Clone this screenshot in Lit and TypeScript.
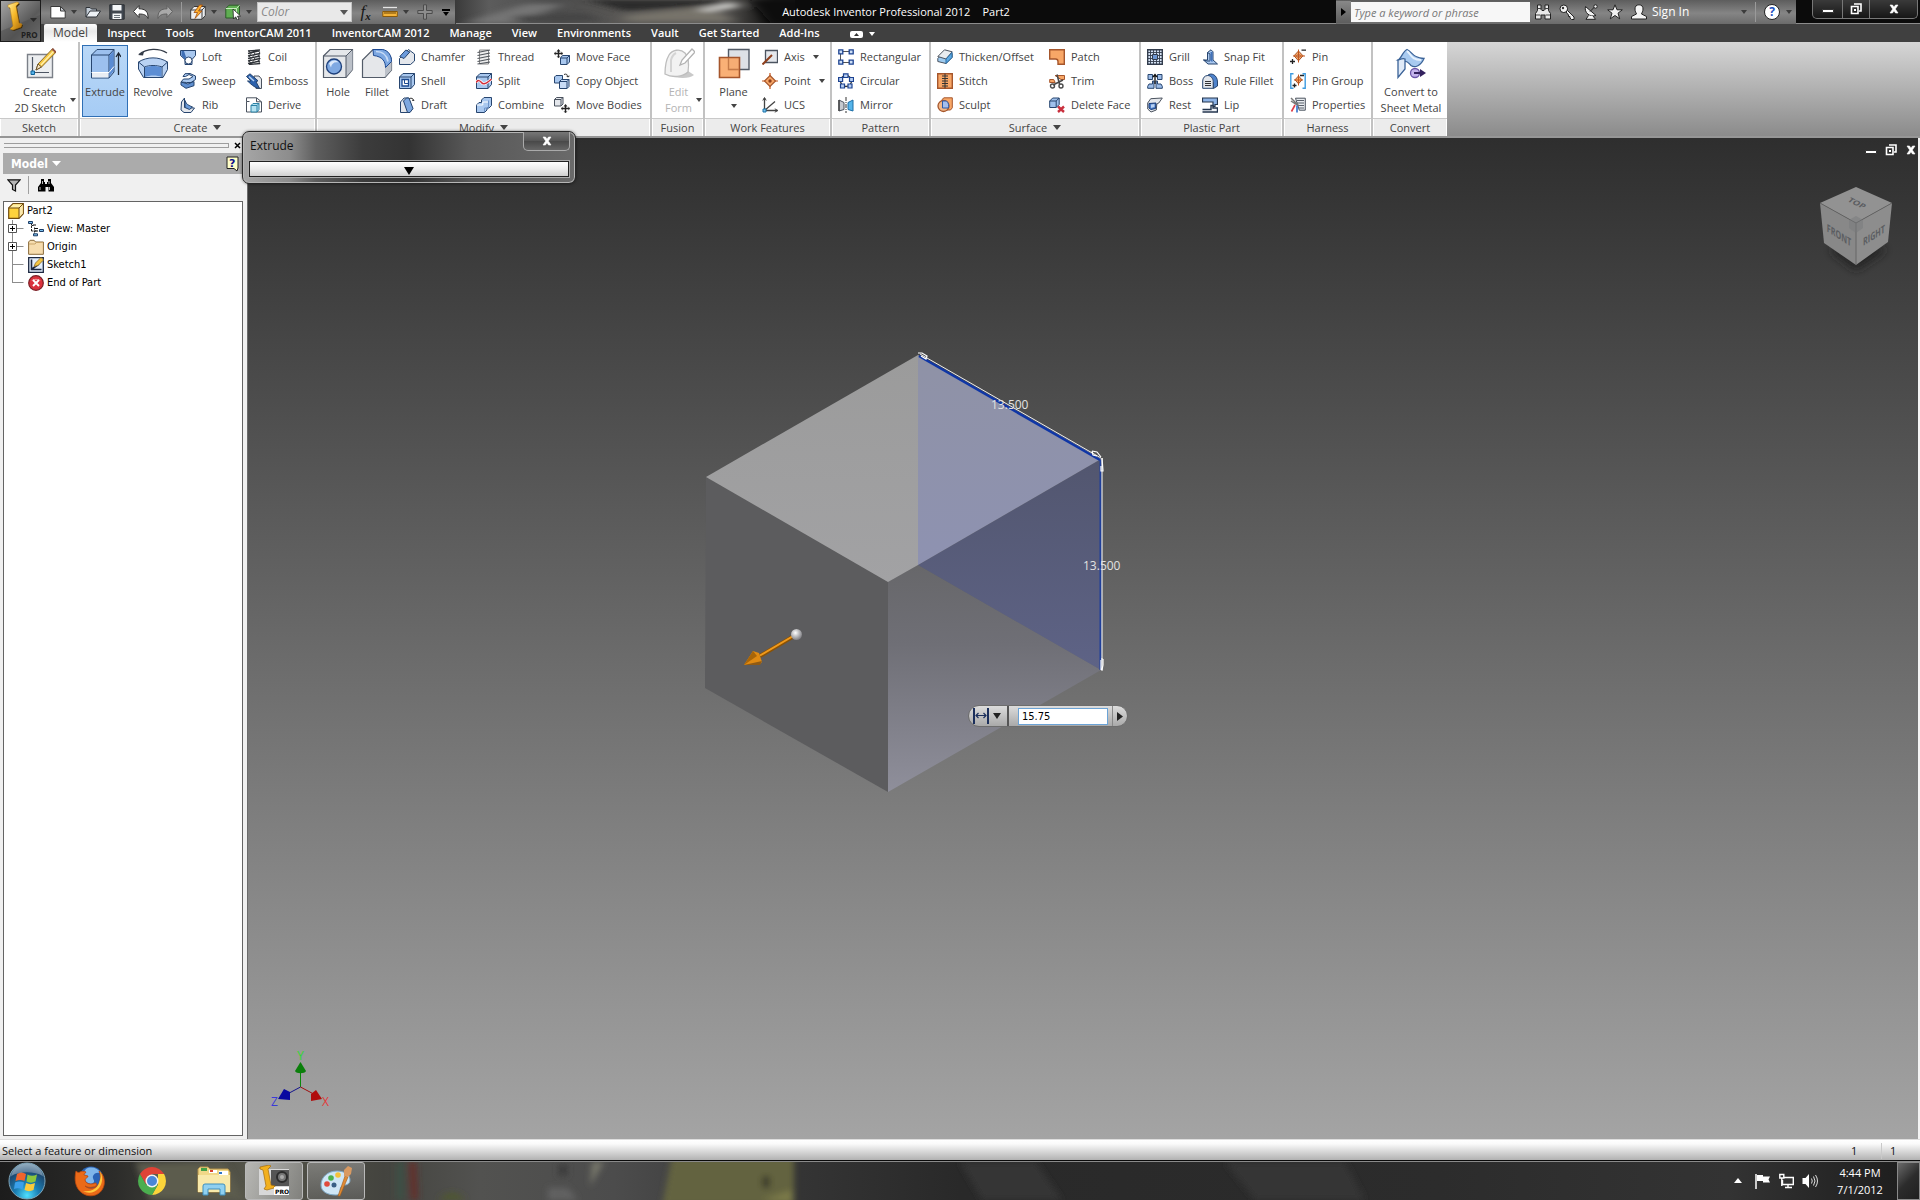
import { LitElement, html, svg, css, nothing, TemplateResult, SVGTemplateResult } from "lit";
import { customElement, state } from "lit/decorators.js";
import { classMap } from "lit/directives/class-map.js";

type Art = SVGTemplateResult;

const B = "#27456f"; // outline blue
const F = "#a9c8ef"; // light blue fill
const G = "#e4e7ec"; // pale grey fill
const O = "#f8a767"; // orange fill
const OS = "#a5562c"; // orange outline
const K = "#4b535f"; // neutral outline

/* 16 x 16 artwork, keyed by command */
const small: Record<string, Art> = {
  Loft: svg`<path d="M.5 1.500h15v5l-3.500 4v5h-7v-5L.5 6.500z" fill="${F}" stroke="${B}"/><path d="M1.500 2h2.500l2 6-1.500 2.500L1.500 6.500z" fill="#3f6fb5"/><circle cx="8.500" cy="11.500" r="3.500" fill="#fff" stroke="${B}"/>`,
  Sweep: svg`<path d="M1 9l2.500-3H9l4-2.500L9 1.500 5.500 3.500H3L5 .7l5-.2 5.500 2.500v3.500L11 9.500H6.500z" fill="${F}" stroke="${B}"/><path d="M1 9v3l5 3.300 8-2.600V8.500L8 11z" fill="#5f8fd0" stroke="${B}"/>`,
  Rib: svg`<path d="M1.500 5l3-4v9.500l10 .5-3.500 4.500h-7l-3-2.500z" fill="${G}" stroke="${B}"/><path d="M5 3.500c1 4 4 5 7.500 6.500l-3 2.500L5 10.500z" fill="#6a9ad8" stroke="${B}"/>`,
  Coil: svg`<g fill="none" stroke="#2d3136" stroke-width="1.300"><path d="M2 2l12-1M2 4.500l12-3M2 7l12-2.500M2 9.500L14 7M2 12l12-2.500M2 14.500L14 12M3 15.500l11-1"/><path d="M3 2l2 2.500L3 7l2 2.500L3 12l2 2.500M12 1.500L14 4l-2 3 2 2.500-2 2.500 2 2.500M7 2l2 3-2 2.500 2 2.500-2 2.500 2 2" stroke-width=".9"/></g>`,
  Emboss: svg`<path d="M8 3h5l2.500 3v9.500H10z" fill="${G}" stroke="${K}"/><path d="M.5 3.500L4 .8l8 7-2 1 3.500 6.500C8 15 4 10 1.500 8L5 8z" fill="#2d62ad" stroke="${B}"/><path d="M3 3.500l5 4.500" stroke="#b8d2f2" stroke-width="1.500"/>`,
  Derive: svg`<path d="M.5 4.500V.8h10l5 4V15h-15z" fill="#fff" stroke="${K}"/><path d="M10.500.8v4h5M.5 4.500h3" fill="none" stroke="${K}"/><path d="M5 8.500l2-2h6v6l-2 2.500H5z" fill="#b6e3f2" stroke="#2c83a6"/><path d="M5 8.500h6V15M11 8.500l2-2" fill="none" stroke="#2c83a6"/>`,
  Chamfer: svg`<path d="M.5 9.500l9-9 6 4.500v7l-4 3.500H.5z" fill="${G}" stroke="${B}"/><path d="M.8 7.500l6-6.500 4 2L5 9.500z" fill="#6c9bdc" stroke="${B}"/>`,
  Shell: svg`<path d="M.5 4l3.500-3.500h11.500v11L12 15.500H.5z" fill="${F}" stroke="${B}"/><path d="M12 15.500V4H.5M12 4l3.500-3.500" fill="none" stroke="${B}"/><path d="M3 6.500h6.500V13H3z" fill="#fff" stroke="#1d4a91" stroke-width="1.300"/><path d="M5.500 7v3.500h4" fill="none" stroke="#1d4a91"/>`,
  Draft: svg`<path d="M1.500 5L5 1h4.500l4 11-3 3.500h-9z" fill="${G}" stroke="${B}"/><path d="M4.500 4l3-3h2.500l4 10.500-3 4H8.500z" fill="#7ea8e0" stroke="${B}"/><path d="M10.500 1.500c2-.8 3.500 0 4.500 2l-2-.3" fill="none" stroke="#333"/>`,
  Thread: svg`<path d="M3.500 1h9v14h-9z" fill="#eee" stroke="#888"/><g stroke="#50555c" stroke-width="1.200"><path d="M1.500 3.500L14 1M1.500 6.500L14 4M1.500 9.500L14 7M1.500 12.500L14 10M1.500 15L14 13"/></g>`,
  Split: svg`<path d="M.5 4l3.500-3.500h11.500v11L12 15.500H.5z" fill="${F}" stroke="${B}"/><path d="M.5 4H12v11.500M12 4l3.500-3.500" fill="none" stroke="${B}"/><path d="M0 9.500c2-3 4-2 5.500 0s4 2 10-3.500" fill="none" stroke="#fff" stroke-width="3"/><path d="M0 9.500c2-3 4-2 5.500 0s4 2 10-3.500" fill="none" stroke="#d12e3a" stroke-width="1.500"/>`,
  Combine: svg`<path d="M5.500 3l2.500-2.500h7.500v8L13 11h-2v2l-2.500 2.500H.5V8L3 5.500h2.500z" fill="${F}" stroke="${B}"/><path d="M.8 8h6V5h6" fill="none" stroke="#fff"/><path d="M8.500 15V11h4V3.500" fill="none" stroke="#6c93c9"/>`,
  "Move Face": svg`<path d="M4.500 0L6.500 2.500h-1.300v1.300H7.500V2.500L9 4.500 7.500 6.500V5.200H5.200V7.500h1.300L4.500 9 2.500 7.500h1.300V5.200H1.500V6.500L0 4.500l1.500-2v1.300h2.300V2.500H2.500z" fill="#222"/><path d="M6.500 9l2-2.500h7v6.500L13 15.500H6.500z" fill="${F}" stroke="${B}"/><path d="M6.500 9H13v6.500M13 9l2.500-2.500" fill="none" stroke="${B}"/>`,
  "Copy Object": svg`<path d="M.5 4L2 2.500h6.500v6L7 10H.5z" fill="${F}" stroke="${B}"/><path d="M5.500 8.500l2-2h7.500v7l-2 2H5.500z" fill="#cadcf6" stroke="${B}"/><path d="M5.500 8.500h7.500v7M13 8.500l2-2" fill="none" stroke="${B}"/><path d="M10 1.500c2-1 4 0 4 2.500l-1.500-1M14 4l1.500-1" fill="none" stroke="#333"/>`,
  "Move Bodies": svg`<path d="M.5 2.500l2-2h6.500v6.500l-2 2H.5z" fill="${G}" stroke="${K}"/><path d="M.5 2.500h6.500V9M7 2.500l2-2" fill="none" stroke="${K}"/><g transform="translate(7 7)"><path d="M4.500 0L6.500 2.500h-1.300v1.300H7.500V2.500L9 4.500 7.500 6.500V5.200H5.200V7.500h1.300L4.500 9 2.500 7.500h1.300V5.200H1.500V6.500L0 4.500l1.500-2v1.300h2.300V2.500H2.500z" fill="#222"/></g>`,
  Axis: svg`<path d="M3.500 1.500h12v12h-12z" fill="${G}" stroke="${K}" stroke-width="1.300"/><path d="M.5 15.500L10 6" stroke="#8e3f1d" stroke-width="2"/>`,
  Point: svg`<path d="M8 2.500L13.500 8 8 13.500 2.500 8z" fill="${O}" stroke="${OS}" stroke-width="1.200"/><circle cx="8" cy="8" r="1.700" fill="#8e3f1d"/><path d="M8 0v3M8 13v3M0 8h3M13 8h3" stroke="#c2561e" stroke-width="1.200"/>`,
  UCS: svg`<path d="M2.500 1v12.500H15.500M2.500 13.500L13 4.500" fill="none" stroke="#444" stroke-width="1.300"/><path d="M.8 3.500L2.500.5l1.700 3M12.800 11.800l3 1.700-3 1.700" fill="none" stroke="#444"/><path d="M1 12h3v3H1z" fill="#7fc4ef" stroke="#1a73a8"/>`,
  Rectangular: svg`<path d="M2.500 2.500h11M2.500 2.500v11h11" fill="none" stroke="#555"/><g fill="#cfe0f7" stroke="#1d4391" stroke-width="1.300"><path d="M.8.800h4v4h-4zM11.200.800h4v4h-4zM.8 11.200h4v4h-4zM11.200 11.200h4v4h-4z"/></g>`,
  Circular: svg`<circle cx="8" cy="8" r="5.500" fill="none" stroke="#333" stroke-width="1.300"/><g fill="#b9d0f2" stroke="#1d4391" stroke-width="1.200"><path d="M5.500.800h4.500v3.700H5.500zM11.500 4.500h4v4h-4zM.6 4.500h4v4h-4zM10 11h4v4h-4zM2.500 11h4v4h-4z"/></g>`,
  Mirror: svg`<path d="M1 3l5 2.500v7L1 14z" fill="#c5c9cf" stroke="${K}"/><path d="M15 3l-5 2.500v7l5 1.500z" fill="#55b4ea" stroke="#1c6ea6"/><path d="M8 0v16" stroke="#333" stroke-dasharray="4 1 1 1"/><path d="M1 3V14" stroke="#444" stroke-width="1.500"/>`,
  "Thicken/Offset": svg`<path d="M.8 9.500L7.500 2.500l7.700 2v4L9 14.500l-8.200-2z" fill="#9ecbf0" stroke="${K}"/><path d="M.8 7.500L7.500.800l7.700 2L9 10z" fill="#e8ecf0" stroke="${K}"/><path d="M9 10v4.500l6-6V3.500z" fill="#5ea9e2" stroke="#2a6fa8"/>`,
  Stitch: svg`<path d="M.7.700h14.600v14.600H.700z" fill="${O}" stroke="${OS}" stroke-width="1.400"/><path d="M8 .7v14.600" stroke="#333"/><path d="M5 3h6M5 5.500h6M5 8h6M5 10.500h6M5 13h6" stroke="#333" stroke-width="1.200"/>`,
  Sculpt: svg`<path d="M5 2.500L7 .8h8.300v10L13.500 13H5z" fill="${O}" stroke="${OS}"/><circle cx="6.500" cy="9" r="5.500" fill="#f3b98a" stroke="${OS}" stroke-width="1.300"/><path d="M5.500 4h4c2.500 2 2.500 5 1.800 7H5.500z" fill="#a5bfee" stroke="#2d5ba9"/>`,
  Patch: svg`<path d="M.7.700h14.600v14.600H9V12.500c0-1.500-1-2.500-2.500-2.500H.7z" fill="${O}" stroke="${OS}" stroke-width="1.400"/>`,
  Trim: svg`<path d="M6 2.500h9.500v4H12z" fill="${O}" stroke="${OS}"/><path d="M.7 6.500h4l1.500 3H.7z" fill="${O}" stroke="${OS}"/><path d="M8 1.500L10.500 11M14 7L4 12" stroke="#4a4a4a" stroke-width="1.600"/><circle cx="12" cy="13" r="2" fill="none" stroke="#4a4a4a" stroke-width="1.400"/><circle cx="3.500" cy="13" r="2" fill="none" stroke="#4a4a4a" stroke-width="1.400"/>`,
  "Delete Face": svg`<path d="M.7 4l3-3h6.500v6.500l-3 3H.7z" fill="#9fc0ec" stroke="${B}"/><path d="M.7 4h6.500v6.500M7.200 4l3-3" fill="none" stroke="${B}"/><path d="M9 9.500l6 5.500M15 9.500L9 15" stroke="#c9303e" stroke-width="2.400"/>`,
  Grill: svg`<path d="M.7.700h14.600v14.600H.700z" fill="#d4e2f5" stroke="#333d4d" stroke-width="1.400"/><path d="M3.500 1v14M6.500 1v14M9.500 1v14M12.500 1v14M1 3.500h14M1 6.500h14M1 9.500h14M1 12.500h14" stroke="#333d4d" stroke-width=".9"/><path d="M5.500 5.500h5v5h-5z" fill="#6d97d3" stroke="#333d4d"/>`,
  Boss: svg`<g fill="#9cbce8" stroke="${B}"><path d="M1 1.500h4.500v5H1zM10.500 1.500H15v5h-4.500zM2 11h3.500V8h1.500v3h0v4.300H.7v-2zM14 11h-3.500V8H9v3h0v4.300h6.300v-2z"/></g><path d="M8 2v9M6 4l2-2.500L10 4" fill="none" stroke="#111" stroke-width="1.300"/>`,
  Rest: svg`<path d="M.7 6l3-4.300L15.300 1l-3.500 5-2 1-.5 6-5.300 2L.7 12z" fill="${G}" stroke="${K}"/><path d="M2 6.500l7-.5-.5 5.500L4 12.500 2 11z" fill="#4a7cc7" stroke="#163a78"/><path d="M4 7.500l3.500-.5v3L4 11z" fill="#b8d1f3"/>`,
  "Snap Fit": svg`<path d="M5.500 3.500L9 .8l2 2V11l4.500 4H6l-4.500-4h4z" fill="${F}" stroke="${B}"/><path d="M5.500 3.500L8 5v6.500M1.500 11l3.500 1h3" fill="none" stroke="${B}"/><path d="M8.500 3v9l2 1V3z" fill="#4273bb"/>`,
  "Rule Fillet": svg`<path d="M5.500 2.500C9-1 15.500 2 15.500 9v4l-4 2.500V10z" fill="#4f83cc" stroke="${B}"/><path d="M.7 15.300V8c0-3 2-5.500 5-5.500s5.500 3 5.500 6v6.800z" fill="${G}" stroke="${B}"/><path d="M3 8.500h6M3 10.500h6M3 12.500h6" stroke="#333"/>`,
  Lip: svg`<path d="M.5 1h15v6.500h-2.500v2h-2V5H.5z" fill="#8db3e6" stroke="#24364f" stroke-width="1.200"/><path d="M.5 12.500h8.500V8.500h2v2.500h4.500v4H.5" fill="#eef2f7" stroke="#24364f" stroke-width="1.400"/>`,
  Pin: svg`<path d="M8.500 2L13 6.800l-4.500 5L4 6.800z" fill="${O}" stroke="${OS}"/><path d="M8.500 5L10.500 7l-2 2-2-2z" fill="#fff" stroke="${OS}"/><path d="M8.500.5v13M3 7h12" stroke="#c2561e"/><path d="M0 12.500h5M2.500 10v5M11.500 1.200H16" stroke="#222" stroke-width="1.300"/>`,
  "Pin Group": svg`<path d="M3.500.8H.8v14.400h2.700M12.500.8h2.700v14.400h-2.700" fill="none" stroke="#3d9be0" stroke-width="1.400"/><path d="M8.500 3L12 6.800l-3.500 4-3.500-4z" fill="${O}" stroke="${OS}"/><path d="M8.500 1.500v11M4 7h9" stroke="#c2561e"/><path d="M2.500 12.500h4M4.500 10.500v4M10 2.500h4" stroke="#222" stroke-width="1.300"/>`,
  Properties: svg`<path d="M5.500 1.200h9.800v12h-6z" fill="#e8ebef" stroke="${K}"/><path d="M7 3.500h7M7 6h7M9 8.500h5M9 11h5" stroke="#59606b"/><path d="M1 1l8 8M1 4l6 4" stroke="#777" stroke-width="1.500"/><path d="M5 8L1.500 14.500" stroke="#de3b46" stroke-width="1.600"/><path d="M7 8.500v7" stroke="#2f6fcb" stroke-width="1.600"/>`,
};

/* 32 x 32 artwork */
const large: Record<string, Art> = {
  Sketch: svg`<path d="M3.500 6.500h25v23h-25z" fill="#eceef0" stroke="#7b8088" stroke-width="1.400"/><path d="M8.500 9v17M8 24.500h17" fill="none" stroke="#4c5563" stroke-width="1.200"/><path d="M7 23h3.500v3.500H7z" fill="#56b2e8" stroke="#11659b"/><path d="M12 22l2-6L28.500.8l3.500 3.400L17.500 19z" fill="#f6c945" stroke="#8b6a2a"/><path d="M28 1.300L28.800.5 32 3.700l-1 1z" fill="#b05a4a" stroke="#83463a"/><path d="M12 22l2-6 3.500 3z" fill="#f7e4c0" stroke="#6b5530"/><path d="M17 17L29.500 3.500" stroke="#fff2b5" stroke-width="1.200"/>`,
  Extrude: svg`<path d="M2.500 7L8 1.500h17V24l-5 6H2.500z" fill="#9cc0ee" stroke="${B}"/><path d="M2.500 7H20v23M20 7l5-5.500" fill="none" stroke="${B}"/><path d="M20.500 7.500l4-4.500v20l-4 5z" fill="#5a8cd3"/><path d="M3 24.500h16.500v5H3z" fill="#e9edf3"/><path d="M2.500 24.500H20l5-6" fill="none" stroke="#fff"/><path d="M29.500 27V6M27 9l2.500-4L32 9" fill="none" stroke="#1d2631" stroke-width="1.300"/>`,
  Revolve: svg`<path d="M2 6.500C10 0 22 0 30 5" fill="none" stroke="#333b48" stroke-width="1.300"/><path d="M1 7l6-3.500-1 4z" fill="#333b48"/><path d="M1.500 14C10 8.500 22 8.500 30.500 14v7.500L26 29.500H6.500L1.500 21z" fill="#b9d2f3" stroke="${B}"/><path d="M7.500 19c5-2 12-2 17.500 0l5.500-5M1.500 14l6 5v10M25 19v10" fill="none" stroke="${B}"/><path d="M8 19.500c5-2 12-2 16.500 0V29c-4-2-12-2-16.500 0z" fill="#5d8ed4"/>`,
  Hole: svg`<path d="M1.500 8L8 1.500h22.500v20L24 29.500H1.500z" fill="#e5e7ea" stroke="#525b68" stroke-width="1.200"/><path d="M24 8.500l6.500-6.500v19.500L24 29z" fill="#bcc1c9"/><path d="M1.500 8H24v21.500M24 8l6.500-6.500" fill="none" stroke="#525b68"/><circle cx="12" cy="18.500" r="7.500" fill="#7fa9e2" stroke="#1d3f7a" stroke-width="1.300"/><path d="M7 15.500c2-3.500 7-4 9.500-1-4-1-7 1-7.500 5z" fill="#dce9fa"/>`,
  Fillet: svg`<path d="M1.500 29.500V12L12 1.500h9C27 3 30.500 8 30.500 14v8L24 29.500z" fill="#e5e7ea" stroke="#525b68" stroke-width="1.200"/><path d="M24 15l6.500-3v10L24 29z" fill="#bcc1c9"/><path d="M12 1.500h9.500c6 1 9 6 9 12l-6 6c0-6-3-11-12-12z" fill="#7ca7e1" stroke="#1d4a94"/><path d="M15 3.500c7 0 11 4 12 10" fill="none" stroke="#c7dbf6" stroke-width="1.600"/>`,
  Form: svg`<path d="M7 27c6 4 20 4 24 0l-6-4z" fill="#c9c9c9"/><path d="M2 26c0-8 1-14 4-19 3-5 11-7 16-2 4 4 4 12 3 19-5 5-16 6-23 2z" fill="#f2f2f2" stroke="#bdbdbd" stroke-width="1.300"/><path d="M8 24V12c1-4 3-6 5-7" fill="none" stroke="#d4d4d4" stroke-width="2"/><path d="M17 17l2-5L29 1l3 3-10 11z" fill="#fff" stroke="#b2b2b2" stroke-width="1.300"/>`,
  Plane: svg`<path d="M10.500 1.500h20.500v20H10.500z" fill="#dde1e6" stroke="#515a66" stroke-width="1.400"/><path d="M1.500 9.500h20v20h-20z" fill="${O}" fill-opacity=".9" stroke="${OS}" stroke-width="1.600"/><path d="M10.500 10v11.500h10.500" fill="none" stroke="#c57a48" stroke-width="1.300"/>`,
  Convert: svg`<path d="M3 12c3-1 5-9 9-10.500 5 2 6 9 17 9-3 7-9 10-13 7-3-3-4-5-6-4z" fill="#a8caf0" stroke="#3a6297" stroke-width="1.300"/><path d="M3 12c3-1 5-2 7-1v10L3 29.500z" fill="#dfeaf8" stroke="#3a6297" stroke-width="1.300"/><path d="M12 3c4 3 4 9 14 9" fill="none" stroke="#e6f1fd" stroke-width="2"/><circle cx="20" cy="25" r="4.500" fill="#c4b4ec" stroke="#6a55a8" stroke-width="1.300"/><path d="M19 24h6v-3l6 4-6 4v-3h-6z" fill="#34225f"/>`,
};

/* quick access and info centre artwork, 16 x 16 */
const tool: Record<string, Art> = {
  New: svg`<path d="M.8 2.500h9.700l4.700 4.500v7H.8z" fill="#fff" stroke="#3a3a3a"/><path d="M10.500 2.500V7h4.700z" fill="#c7ccd2" stroke="#3a3a3a"/>`,
  Open: svg`<path d="M1 13V3.500h4l1.500 1.500h5v2" fill="#c3ccd6" stroke="#2f3338"/><path d="M1 13L5 7h10.500l-4 6z" fill="#eef2f6" stroke="#2f3338"/>`,
  Save: svg`<path d="M.8.800h14.400v14.400H.800z" fill="#404750" stroke="#2a2e33"/><path d="M3.500 1h9v5.500h-9zM3.500 9.500h9V15h-9z" fill="#f5f7f9"/><path d="M5 11.500h6M5 13.500h6" stroke="#6a727c"/>`,
  Undo: svg`<path d="M6 1.500v3.300c6 0 9.500 2.500 9 9.700-1.500-3.500-4-4.500-9-4.500v3.500L.5 7.500z" fill="#fff" stroke="#333"/>`,
  Redo: svg`<path d="M10 1.500v3.300c-6 0-9.500 2.500-9 9.700 1.500-3.500 4-4.500 9-4.500v3.500l5.500-6z" fill="#a9a9a9" stroke="#606060"/>`,
  Update: svg`<path d="M.7 6L4 2.500h11.300v9L12 15.300H.7z" fill="#eceef0" stroke="#3a3a3a"/><path d="M.7 6H12v9M12 6l3.300-3.500" fill="none" stroke="#3a3a3a"/><path d="M9.500 1L4 8.500h3.500L5 14.500 12 7H8.500l4-6z" fill="#ffb02e" stroke="#a04c0e" stroke-width=".8"/>`,
  Select: svg`<path d="M.8 4.500L4 1.200h10.500v9L11.500 14H.8z" fill="#5fae52" stroke="#2d5a28"/><path d="M.8 4.500h10.700V14M11.500 4.500l3-3.300" fill="none" stroke="#c9ecc0"/><path d="M8 5l7.500 7-3 .2 1.500 3-1.800.800-1.500-3.200L8.500 15z" fill="#fff" stroke="#222" stroke-width=".8"/>`,
  Measure: svg`<path d="M1 3.500h14" stroke="#e5e5e5" stroke-width="1.300"/><path d="M.8 7.500h14.500v5H.8z" fill="#f4b43a" stroke="#8a5a0c"/><path d="M3 8v2M5 8v2M7 8v2M9 8v2M11 8v2M13 8v2" stroke="#6b4406"/>`,
  Plus: svg`<path d="M6.500.8h3v5.700h5.700v3H9.500v5.700h-3V9.500H.8v-3h5.700z" fill="#8d8d8d" stroke="#4c4c4c"/>`,
  Find: svg`<path d="M2.500 1h3.500v4.500l1 1h2l1-1V1h3.500v5.500l2 3v5.500h-5.500v-4h-4v4H.5V9.500l2-3z" fill="#e8e8e8" stroke="#222"/><path d="M2.500 4.500h3.500M10 4.500h3.500M1 11h4.500M10.500 11H15" stroke="#444"/>`,
  Key: svg`<circle cx="4.800" cy="4.800" r="3.800" fill="#f2f2f2" stroke="#222"/><circle cx="4" cy="4" r="1.200" fill="#333"/><path d="M7 8l1.500-1.500 6.500 6.500v2.500h-2.500L11 14v-1.500H9.500V11z" fill="#f2f2f2" stroke="#222"/>`,
  Dish: svg`<path d="M2.500 2.500c-1.500 6 4 11 10.500 9z" fill="#f2f2f2" stroke="#222"/><path d="M7 7.500l5-5M5.500 11.500L3 15.300h9.500L10 12" fill="#f2f2f2" stroke="#222"/><circle cx="12.500" cy="2.500" r="1.700" fill="#f2f2f2" stroke="#222"/>`,
  Star: svg`<path d="M8 .8l2 5h5.300l-4.300 3.400 1.700 5.600L8 11.500l-4.700 3.300L5 9.200.7 5.800H6z" fill="#f2f2f2" stroke="#222"/>`,
  Person: svg`<path d="M8 .8c3 0 4 2 4 4.200 0 2.500-1 3.500-1.500 5l5 2.500v2.500H.5v-2.500l5-2.500C5 8.500 4 7.500 4 5 4 2.800 5 .8 8 .8z" fill="#f5f5f5" stroke="#222"/>`,
};

const icon = (art: Art, size = 16, box = size): TemplateResult =>
  html`<svg class="ico" width=${size} height=${size} viewBox="0 0 ${box} ${box}" aria-hidden="true">${art}</svg>`;
const caret = (): TemplateResult =>
  html`<svg class="ico" width="6" height="4" viewBox="0 0 6 4" aria-hidden="true"><path d="M0 0h6L3 4z" fill="currentColor"/></svg>`;

interface Big { art: string; label: string[]; active?: boolean; disabled?: boolean; side?: boolean; below?: boolean }
interface Cmd { label: string; menu?: boolean }
interface Panel { key: string; title: string; more?: boolean; big: Big[]; cols: Cmd[][] }

const cmds = (...names: string[]): Cmd[] => names.map((label) => ({ label }));

const panels: Panel[] = [
  { key: "sketch", title: "Sketch", big: [{ art: "Sketch", label: ["Create", "2D Sketch"], side: true }], cols: [] },
  { key: "create", title: "Create", more: true, big: [{ art: "Extrude", label: ["Extrude"], active: true }, { art: "Revolve", label: ["Revolve"] }], cols: [cmds("Loft", "Sweep", "Rib"), cmds("Coil", "Emboss", "Derive")] },
  { key: "modify", title: "Modify", more: true, big: [{ art: "Hole", label: ["Hole"] }, { art: "Fillet", label: ["Fillet"] }], cols: [cmds("Chamfer", "Shell", "Draft"), cmds("Thread", "Split", "Combine"), cmds("Move Face", "Copy Object", "Move Bodies")] },
  { key: "fusion", title: "Fusion", big: [{ art: "Form", label: ["Edit", "Form"], disabled: true, side: true }], cols: [] },
  { key: "work", title: "Work Features", big: [{ art: "Plane", label: ["Plane"], below: true }], cols: [[{ label: "Axis", menu: true }, { label: "Point", menu: true }, { label: "UCS" }]] },
  { key: "pattern", title: "Pattern", big: [], cols: [cmds("Rectangular", "Circular", "Mirror")] },
  { key: "surface", title: "Surface", more: true, big: [], cols: [cmds("Thicken/Offset", "Stitch", "Sculpt"), cmds("Patch", "Trim", "Delete Face")] },
  { key: "plastic", title: "Plastic Part", big: [], cols: [cmds("Grill", "Boss", "Rest"), cmds("Snap Fit", "Rule Fillet", "Lip")] },
  { key: "harness", title: "Harness", big: [], cols: [cmds("Pin", "Pin Group", "Properties")] },
  { key: "convert", title: "Convert", big: [{ art: "Convert", label: ["Convert to", "Sheet Metal"] }], cols: [] },
];

const tabs = ["Model", "Inspect", "Tools", "InventorCAM 2011", "InventorCAM 2012", "Manage", "View", "Environments", "Vault", "Get Started", "Add-Ins"];

const treeArt: Record<string, Art> = {
  part: svg`<path d="M.7 5L5 .7h10.300v10L11 15.300H.7z" fill="#ffd23c" stroke="#6f4a10" stroke-width="1.200"/><path d="M1.300 5L5.300 1.300h9.400L11 5z" fill="#fff0a8"/><path d="M11 5l3.800-3.500v9L11 14.500z" fill="#fbe9b0"/><path d="M.7 5H11v10.300M11 5L15.300.7" fill="none" stroke="#6f4a10"/>`,
  view: svg`<path d="M3.500 2v9M3.500 4.500h2M3.500 10h5M6.500 6.500v7h2" fill="none" stroke="#222" stroke-dasharray="2 1"/><g fill="#7cc0ec" stroke="#1c3c66"><path d="M.5.500h4v2h-4zM11.500 8.500h4v2h-4zM5.500 12.800h4v2h-4z"/></g><path d="M5 4h3M7 7.500h3M7 10h3" stroke="#111"/>`,
  folder: svg`<path d="M.6 3l1.500-1.700h4L7.500 3h7.900v12.300H.6z" fill="#f6dcae" stroke="#8a6c3c"/><path d="M1 5h6l1.500-1.500H15" fill="none" stroke="#c9a56b"/>`,
  sketch: svg`<path d="M.7.700h14.600v14.600H.700z" fill="#e3eefc" stroke="#1b2740" stroke-width="1.300"/><path d="M3.500 2.500v10h10M4 12l7-5" fill="none" stroke="#1b2740" stroke-width="1.600"/><path d="M6 9.500L7.500 6 13 .5 15.500 3 10 8.500z" fill="#f5c540" stroke="#8b6a2a" stroke-width=".8"/>`,
  end: svg`<circle cx="8" cy="8" r="7.300" fill="#d9313c" stroke="#7a1e25" stroke-width="1.200"/><path d="M3 6a6 5 0 0 1 10 0c-3-1.500-7-1.500-10 0z" fill="#f08f95"/><path d="M5 5l6 6M11 5l-6 6" stroke="#fff" stroke-width="1.900"/>`,
};

const nodes = [
  { art: "view", label: "View: Master", expand: true },
  { art: "folder", label: "Origin", expand: true },
  { art: "sketch", label: "Sketch1" },
  { art: "end", label: "End of Part", last: true },
];

@customElement("app-root")
export class AppRoot extends LitElement {
  @state() private tab = "Model";
  @state() private distance = "15.75";

  static styles = css`
    :host {
      display: flex; flex-direction: column; height: 100vh; overflow: hidden;
      font: 12px/16px "Open Sans", "Noto Sans", sans-serif; color: #3c3c3c; background: #f0f0f0;
    }
    * { box-sizing: border-box; }
    button, input, select { font: inherit; color: inherit; margin: 0; padding: 0; border: 0; background: none; border-radius: 0; }
    button, a { display: flex; align-items: center; justify-content: center; white-space: nowrap; }
    a { color: inherit; text-decoration: none; }
    ul { list-style: none; margin: 0; padding: 0; }
    h1, h2 { font: inherit; margin: 0; }
    .ico { display: block; flex: none; }

    .header { display: grid; grid-template-columns: 41px 1fr; grid-template-rows: 24px 18px; background: #404040; flex: none; }
    .app { grid-row: 1 / 3; border: 1px solid #1c1c1c; background: linear-gradient(135deg, #a5a5a5, #5a5a5a 60%, #8a8a8a); }
    .title { display: flex; background: #0b0b0b; border-bottom: 1px solid #8c8c8c; position: relative; min-width: 0; }
    .wall { position: absolute; left: 414px; top: 0; width: 340px; height: 23px; }
    .qat { display: flex; align-items: center; gap: 8px; width: 415px; height: 24px; padding: 0 4px 0 9px; position: relative;
      background: linear-gradient(#5d5d5d, #858585 55%, #6b6b6b); border-right: 1px solid #3a3a3a; color: #3c3c3c; flex: none; }
    .split { gap: 5px; }
    .rule { width: 1px; height: 20px; background: #9a9a9a; flex: none; }
    .combo { display: flex; align-items: center; width: 98px; height: 20px; background: #e9e9e9; border: 1px solid #c4c4c4; padding: 0 3px; margin: 0 -2px 0 -3px; }
    .combo select { appearance: none; flex: 1; min-width: 0; font-style: italic; color: #8a8a8a; outline: 0; }
    .fx { font: italic 17px/20px "Liberation Serif", serif; color: #161616; width: 16px; margin-right: 1px; }
    .fx sub { font-size: 11px; font-weight: 700; vertical-align: -3px; line-height: 0; }
    .more { flex-direction: column; gap: 1px; color: #000; width: 10px; }
    .more::before { content: ""; width: 8px; height: 2px; background: #000; }
    .caption { flex: 1; display: flex; align-items: center; justify-content: center; gap: 12px; color: #fff; font-size: 11px; position: relative; min-width: 0; white-space: nowrap; }
    .info { display: flex; align-items: center; gap: 8px; width: 460px; height: 24px; background: linear-gradient(#5d5d5d, #858585 55%, #6b6b6b); color: #fff; flex: none; }
    .info .open { width: 15px; height: 22px; color: #000; background: linear-gradient(#888, #5e5e5e); margin-right: -8px; }
    .info input { width: 179px; height: 20px; background: #f7f7f7; padding: 0 3px; font-size: 11px; font-style: italic; margin-right: -3px; }
    .info input::placeholder { color: #777; opacity: 1; }
    .sign { flex: 1; justify-content: space-between; margin-left: -3px; font-size: 12px; }
    .info .ico { color: #3c3c3c; }
    .help { width: 16px; height: 16px; border-radius: 8px; background: #fff; color: #1d4fc0; font-weight: 700; line-height: 14px; border: 1px solid #222; }
    .help-box { gap: 6px; padding-right: 4px; }
    .win { display: flex; height: 19px; margin: 0 2px 0 16px; border: 1px solid #777; border-top: 0; border-radius: 0 0 5px 5px; background: linear-gradient(#3a3a3a, #161616); flex: none; }
    .win button { width: 27px; padding-bottom: 1px; }
    .win button + button { border-left: 1px solid #777; }
    .win button:first-child { width: 29px; }
    .win button:last-child { width: 48px; }

    .tabs { display: flex; align-items: flex-end; padding-left: 3px; color: #fff; font-weight: 600; font-size: 11px; }
    .tabs a { height: 18px; padding: 0 10px; }
    .tabs .on { background: linear-gradient(#fdfdfd, #e9e9e9 40%, #fff); color: #444; font-weight: 400; font-size: 12px; border-radius: 2px 2px 0 0; padding: 0 9px; }
    .tabs .min { margin-left: 20px; gap: 6px; height: 16px; }

    .ribbon { display: flex; height: 96px; background: linear-gradient(#d6d6d6, #8b8b8b); border-bottom: 2px solid #969696; flex: none; }
    .panel { display: flex; flex-direction: column; background: #fff; border-right: 2px solid #c2c2c2; color: #444; font-size: 11px; }
    .panel.convert { border-right: 0; }
    .body { flex: 1; display: grid; padding: 3px 0 0 2px; border-bottom: 1px solid #c9c9c9; }
    .name { display: flex; align-items: center; justify-content: center; gap: 6px; height: 17px; background: #ececec; margin: 0 1px; }
    .sketch .body { grid-template-columns: 76px; }
    .create .body { grid-template-columns: 46px 50px 66px 71px; }
    .modify .body { grid-template-columns: 38px 40px 77px 78px 98px; }
    .fusion .body { grid-template-columns: 49px; }
    .work .body { grid-template-columns: 53px 70px; }
    .pattern .body { grid-template-columns: 93px; }
    .surface .body { grid-template-columns: 112px 92px; }
    .plastic .body { grid-template-columns: 55px 82px; }
    .harness .body { grid-template-columns: 83px; }
    .convert .body { grid-template-columns: 72px; }
    .pattern .body, .surface .body, .plastic .body, .harness .body { padding-left: 4px; }
    .big { flex-direction: column; justify-content: flex-start; height: 72px; padding: 2px 0 0; border: 1px solid transparent; gap: 4px; }
    .big.on { background: linear-gradient(#bad8f7, #a6ccf5); border-color: #2f6fb5; }
    .big:disabled { color: #b4b4b4; }
    .lines { display: flex; align-items: center; gap: 4px; }
    .lines.beside { padding-left: 10px; }
    .lines.below { flex-direction: column; gap: 4px; }
    .lines .ico { color: #444; }
    .col { display: flex; flex-direction: column; padding-left: 2px; }
    .col button { height: 24px; justify-content: flex-start; gap: 6px; }
    .col span + .ico { margin-left: 2px; }

    .main { flex: 1; display: flex; min-height: 0; }
    .side { width: 248px; display: flex; flex-direction: column; border-right: 1px solid #6b6b6b; background: #f0f0f0; flex: none;
      font: 11px/18px "DejaVu Sans Condensed", "Noto Sans", sans-serif; color: #000; padding: 0 0 3px 3px; }
    .grip { display: flex; align-items: center; gap: 5px; height: 15px; padding-left: 1px; }
    .grip i { width: 225px; height: 5px; border: solid #9d9d9d; border-width: 1px 1px 1px 0; }
    .head { display: flex; align-items: center; justify-content: space-between; height: 21px; background: #ababab; color: #fff; padding: 0 7px 0 8px; }
    .head button { gap: 4px; font: 700 12px/18px "DejaVu Sans Condensed", sans-serif; }
    .bar { display: flex; align-items: center; gap: 7px; height: 22px; padding: 0 4px; margin-bottom: 5px; }
    .bar .rule { height: 18px; margin-right: 2px; background: #a0a0a0; }
    .tree { flex: 1; border: 1px solid #646464; background: #fff; margin-right: 4px; }
    .node { display: flex; align-items: center; height: 18px; gap: 3px; }
    .node .wire { margin-right: -3px; }
    .node.root { padding-left: 4px; }

    .view { flex: 1; position: relative; background: linear-gradient(#2e2e2e, #a4a4a4); border-right: 2px solid #f4f4f4; overflow: hidden; min-width: 0; }
    .doc { display: flex; justify-content: flex-end; gap: 8px; padding: 6px 1px; }
    .viewcube { position: absolute; right: 20px; top: 42px; }
    .model { position: absolute; left: 440px; top: 200px; }
    .triad { position: absolute; left: 18px; bottom: 25px; }
    .mini { position: absolute; left: 720px; top: 567px; display: flex; align-items: center; height: 22px; width: 160px; border-radius: 11px; border: 1px solid #6d6d6d;
      background: linear-gradient(#dcdcdc, #a9a9a9); font: 11px/16px "DejaVu Sans Condensed", sans-serif; color: #000; }
    .mini .mode { gap: 4px; justify-content: flex-start; padding-left: 4px; width: 40px; height: 20px; border-right: 2px solid #555; }
    .mini input { width: 90px; height: 17px; margin: 0 4px 0 9px; background: #fff; border: 1px solid #6ba3d6; padding: 0 3px; }
    .mini .go { flex: 1; height: 20px; border-left: 1px solid #888; }

    .dialog { position: absolute; left: 242px; top: 131px; width: 334px; height: 53px; border: 1px solid #262626; border-radius: 7px; padding: 0 5px 5px; color: #111;
      box-shadow: inset 0 0 0 1px #b5b5b5, 0 0 3px rgba(0,0,0,.5);
      background: linear-gradient(90deg, #a6a6a6, #8d8d8d 14%, #5e5e5e 22%, #3c3c3c 36%, #333 50%, #585858 68%, #6a6a6a); display: flex; flex-direction: column; }
    .dialog .top { display: flex; justify-content: space-between; height: 28px; }
    .dialog h2 { padding: 6px 0 0 2px; }
    .dialog .x { width: 47px; height: 19px; border: 1px solid #aaa; border-top: 0; border-radius: 0 0 5px 5px; background: linear-gradient(#777, #555 50%, #484848 50%, #666); }
    .dialog .roll { flex: 1; border: 1px solid #222; outline: 1px solid #aaa; background: linear-gradient(#fff, #ececec 50%, #cfcfcf); margin: 1px; padding-top: 3px; }

    .status { display: flex; align-items: center; height: 21px; padding: 2px 0 0 2px; color: #111; background: linear-gradient(#fff, #fafafa 20%, #b2b2b2); border-top: 1px solid #dedede; flex: none; font-size: 11px; }
    .status p { margin: 0; flex: 1; }
    .status output { width: 39px; padding-left: 9px; }
    .status output + output { border-left: 1px solid #c9c9c9; padding-left: 8px; }

    .task { position: relative; height: 40px; background: #2a2a2a; border-top: 1px solid #0a0a0a; box-shadow: inset 0 1px #8a8a8a; display: flex; align-items: center; flex: none; color: #fff; overflow: hidden; }
    .task .scene { position: absolute; left: 0; top: 1px; width: 100%; height: 38px; }
    .task > button, .task > .tray { position: relative; }
    .task .launch { width: 62px; height: 38px; }
    .task .orb { width: 59px; padding-right: 5px; }
    .task .running { width: 58px; height: 38px; border: 1px solid #b9b9b9; border-radius: 3px; margin-right: 4px; background: linear-gradient(rgba(170,170,170,.5), rgba(110,110,110,.5)); }
    .task .running.front { background: linear-gradient(110deg, rgba(225,225,225,.7), rgba(170,170,170,.55)); }
    .tray { margin-left: auto; display: flex; align-items: center; gap: 8px; height: 100%; }
    .tray .hidden { margin-right: 5px; }
    .clock { text-align: center; line-height: 17px; font-size: 11px; width: 74px; margin: 0 -8px 0 -3px; }
    .peek { width: 23px; height: 38px; border: 1px solid #8a8a8a; background: linear-gradient(135deg, #6a6a6a, #2c2c2c 50%, #1f1f1f); }
  `;

  private bigButton(b: Big) {
    const arrow = b.side || b.below;
    return html`<button class=${classMap({ big: true, on: !!b.active })} ?disabled=${b.disabled}>
      ${icon(large[b.art], 32)}
      <span class=${classMap({ lines: true, beside: !!b.side, below: !!b.below })}>
        <span>${b.label.map((l, i) => html`${i ? html`<br />` : nothing}${l}`)}</span>${arrow ? caret() : nothing}
      </span>
    </button>`;
  }

  private panel(p: Panel) {
    return html`<section class="panel ${p.key}">
      <div class="body">
        ${p.big.map((b) => this.bigButton(b))}
        ${p.cols.map((col) => html`<div class="col">
          ${col.map((c) => html`<button>${icon(small[c.label])}<span>${c.label}</span>${c.menu ? caret() : nothing}</button>`)}
        </div>`)}
      </div>
      <h2 class="name">${p.title}${p.more ? html`<svg class="ico" width="8" height="5" viewBox="0 0 8 5"><path d="M0 0h8L4 5z" fill="#444"/></svg>` : nothing}</h2>
    </section>`;
  }

  private winGlyphs(kind: string) {
    const art: Record<string, Art> = {
      Minimize: svg`<path d="M.5 6.500h11v3H.5z" fill="#fff" stroke="#333"/>`,
      Restore: svg`<path d="M4 1h7v7H9M1.500 3.500h6.500v7H1.500z" fill="none" stroke="#fff" stroke-width="1.600"/><path d="M4 6h2v2H4z" fill="#fff"/>`,
      Close: svg`<path d="M2 2h2.500L6 4.300 7.500 2H10L7.300 6 10 10H7.500L6 7.700 4.500 10H2l2.700-4z" fill="#fff" stroke="#fff" stroke-width=".6"/>`,
    };
    return html`<svg class="ico" width="12" height="12" viewBox="0 0 12 12" aria-hidden="true">${art[kind]}</svg>`;
  }

  private quickAccess() {
    const one = (n: string) => html`<button aria-label=${n}>${icon(tool[n])}</button>`;
    const menu = (n: string) => html`<button class="split" aria-label=${n}>${icon(tool[n])}${caret()}</button>`;
    return html`<div class="qat">
      ${menu("New")}${one("Open")}${one("Save")}${one("Undo")}${one("Redo")}
      <span class="rule"></span>
      ${menu("Update")}${menu("Select")}
      <label class="combo"><select aria-label="Color"><option>Color</option></select>
        <svg class="ico" width="8" height="5" viewBox="0 0 8 5"><path d="M0 0h8L4 5z" fill="#555"/></svg></label>
      <button class="fx" aria-label="Parameters"><span>f<sub>x</sub></span></button>
      ${menu("Measure")}${one("Plus")}
      <button class="more" aria-label="Customize">${caret()}</button>
    </div>`;
  }

  private header() {
    const one = (n: string) => html`<button aria-label=${n}>${icon(tool[n])}</button>`;
    return html`<header class="header">
      <button class="app" aria-label="Application menu">
        <svg class="ico" width="39" height="40" viewBox="0 0 39 40">
          <defs><linearGradient id="gold" x1="0" y1="0" x2="1" y2="1"><stop offset="0" stop-color="#fff0a0"/><stop offset=".45" stop-color="#f7b92a"/><stop offset="1" stop-color="#a86708"/></linearGradient></defs>
          <path d="M0 30L39 14v26H0z" fill="#4c4c4c" opacity=".5"/>
          <path d="M7 4l9-3 2 1-3 3 3 17 3 1-1 3-8 3-3-1 3-3L9 7 7 6z" fill="#3d2a08" transform="translate(1 1)"/>
          <path d="M7 4l9-3 2 1-3 3 3 17 3 1-1 3-8 3-3-1 3-3L9 7 7 6z" fill="url(#gold)" stroke="#b97c10" stroke-width=".5"/>
          <path d="M29 17h7l-3.500 4z" fill="#2a2a2a"/>
          <text x="20" y="37" font-family="Open Sans" font-size="8" font-weight="700" fill="#1e1e1e">PRO</text>
        </svg>
      </button>
      <div class="title">
        <svg class="wall" viewBox="0 0 340 23" preserveAspectRatio="none" aria-hidden="true">
          <defs>
            <linearGradient id="tw" x1="0" x2="1" y1="0" y2="0"><stop offset="0" stop-color="#3a3a3a"/><stop offset=".1" stop-color="#5c5c5c"/><stop offset=".3" stop-color="#4c4c4c"/><stop offset=".55" stop-color="#5d5b58"/><stop offset=".78" stop-color="#5d5b58"/><stop offset=".94" stop-color="#0b0b0b"/></linearGradient>
            <filter id="soft" x="-20%" y="-60%" width="140%" height="220%"><feGaussianBlur stdDeviation="7 2"/></filter>
          </defs>
          <path d="M0 0h340v23H0z" fill="url(#tw)"/>
          <g filter="url(#soft)"><path d="M10 23L70 4 110 4 60 23z" fill="#747474"/><path d="M130 0h140v4l-100 7z" fill="#2b2b2b"/><path d="M60 16l70-3 20 8H60z" fill="#444"/><path d="M170 16l80-9 30 14H170z" fill="#77736b"/><path d="M245 9l35-7 4 5-34 5z" fill="#d6d5d2"/><path d="M295 0h60v23h-40z" fill="#070707"/></g>
        </svg>
        ${this.quickAccess()}
        <h1 class="caption"><span>Autodesk Inventor Professional 2012</span><span>Part2</span></h1>
        <div class="info">
          <button class="open" aria-label="Collapse"><svg class="ico" width="5" height="8" viewBox="0 0 5 8"><path d="M0 0l5 4-5 4z" fill="#000"/></svg></button>
          <input type="search" aria-label="Search help" placeholder="Type a keyword or phrase" />
          ${["Find", "Key", "Dish", "Star", "Person"].map(one)}
          <button class="sign"><span>Sign In</span>${caret()}</button>
          <span class="rule"></span>
          <button class="help-box" aria-label="Help"><span class="help">?</span>${caret()}</button>
        </div>
        <div class="win">${["Minimize", "Restore", "Close"].map((k) => html`<button aria-label=${k}>${this.winGlyphs(k)}</button>`)}</div>
      </div>
      <nav class="tabs">
        ${tabs.map((t) => html`<a href="#" class=${classMap({ on: t === this.tab })} @click=${(e: Event) => { e.preventDefault(); this.tab = t; }}>${t}</a>`)}
        <button class="min" aria-label="Minimize ribbon">
          <svg class="ico" width="13" height="7" viewBox="0 0 13 7"><rect width="13" height="7" rx="2" fill="#fff"/><path d="M4 5h5L6.500 2z" fill="#333"/></svg>${caret()}
        </button>
      </nav>
    </header>`;
  }

  private browser() {
    return html`<aside class="side">
      <div class="grip"><i></i><button aria-label="Close browser"><svg class="ico" width="7" height="7" viewBox="0 0 7 7"><path d="M1 1l5 5M6 1L1 6" stroke="#000" stroke-width="1.500"/></svg></button></div>
      <div class="head">
        <button>Model<svg class="ico" width="9" height="5" viewBox="0 0 9 5"><path d="M0 0h9L4.500 5z" fill="#fff"/></svg></button>
        <button aria-label="Help"><svg class="ico" width="14" height="16" viewBox="0 0 14 16"><path d="M1 1h11v11l-1 3-3-2.500H1z" fill="#ffffc8" stroke="#222"/><text x="3" y="11" font-size="11" font-weight="700" font-family="DejaVu Sans" fill="#10108a">?</text></svg></button>
      </div>
      <div class="bar">
        <button aria-label="Filter"><svg class="ico" width="14" height="13" viewBox="0 0 14 13"><path d="M.8.800h12.400L8.500 6v6l-3-1.500V6z" fill="#b5b5b5" stroke="#111" stroke-width="1.200"/></svg></button>
        <span class="rule"></span>
        <button aria-label="Find"><svg class="ico" width="16" height="14" viewBox="0 0 16 14"><path d="M3 1h3v3h1v2h2V4h1V1h3v4l3 4v4.500h-5.500V9h-3v4.500H0V9l3-4z" fill="#000"/><path d="M4.500 3v3M11 3v3M2 9v3M11.500 9v3" stroke="#bbb"/></svg></button>
      </div>
      <ul class="tree">
        <li class="node root">${icon(treeArt.part)}<span>Part2</span></li>
        ${nodes.map((n) => html`<li class="node">
          <svg class="ico wire" width="24" height="18" viewBox="0 0 24 18" aria-hidden="true">
            <path d="M8.500 0V${n.last ? 9 : 18}M8.500 8.500H19.500" fill="none" stroke="#8c8c8c"/>
            ${n.expand ? svg`<path d="M4.500 4.500h8v8h-8z" fill="#fff" stroke="#555"/><path d="M6 8.500h5M8.500 6v5" stroke="#000"/>` : nothing}
          </svg>${icon(treeArt[n.art])}<span>${n.label}</span></li>`)}
      </ul>
    </aside>`;
  }

  private scene() {
    return html`<svg class="model" width="450" height="480" viewBox="688 338 450 480" role="img" aria-label="Extruded box preview">
        <defs>
          <linearGradient id="fr" x1="0" y1="0" x2="0" y2="1"><stop offset="0" stop-color="#67676a"/><stop offset=".35" stop-color="#6f6f76"/><stop offset="1" stop-color="#8f8f9b"/></linearGradient>
          <linearGradient id="bl" x1="0" y1="0" x2="0" y2="1"><stop offset="0" stop-color="#52566f"/><stop offset="1" stop-color="#5e6386"/></linearGradient>
          <linearGradient id="tb" x1="0" y1="0" x2="0" y2="1"><stop offset="0" stop-color="#8f92a6"/><stop offset="1" stop-color="#8e92b1"/></linearGradient>
          <linearGradient id="tl" x1="0" y1="0" x2="0" y2="1"><stop offset="0" stop-color="#9b9b9b"/><stop offset="1" stop-color="#a2a2a4"/></linearGradient>
          <radialGradient id="ball" cx=".4" cy=".35" r=".7"><stop offset="0" stop-color="#fff"/><stop offset="1" stop-color="#77777c"/></radialGradient>
        </defs>
        <path d="M706 477L888 582v210L705 688z" fill="#5c5c5e"/>
        <path d="M888 582l30-17 183 105-213 122z" fill="url(#fr)"/>
        <path d="M918 565l183-106v211z" fill="url(#bl)"/>
        <path d="M918 355L706 477l182 105 30-17z" fill="url(#tl)"/>
        <path d="M918 355v210l183-106z" fill="url(#tb)"/>
        <path d="M919 356l181 104" stroke="#0f36a6" stroke-width="2.500"/>
        <path d="M920 354l181 104" stroke="#fff" stroke-width=".9"/>
        <path d="M1100.500 460v210" stroke="#1f3f9a" stroke-width="2"/>
        <path d="M1102 458v213" stroke="#fff"/>
        <g fill="none" stroke="#fff" stroke-width="1.200"><path d="M918 353l4 0 5 3-1 3-5-3M1092 451l5 1 4 5M1092 451l1 4 4 1M1102 458l1 13-2 0v-5M1101 660v10M1103 659v6l-1 5M1101 659h2"/></g>
        <g font-family="Open Sans" font-size="12" fill="#e2e2e2"><text x="991" y="409">13.500</text><text x="1083" y="570">13.500</text></g>
        <path d="M794 636l-34 20" stroke="#8a5206" stroke-width="4"/><path d="M794 635.500l-34 20" stroke="#f09a1c" stroke-width="2"/>
        <path d="M744 665l9-14 6 2 3 9-3 3z" fill="#e08a12"/><path d="M744 665l9-14 4 5z" fill="#a86508"/><path d="M744 665l18-4-2 4z" fill="#8f5a14"/>
        <circle cx="796.500" cy="634.500" r="5.500" fill="url(#ball)"/>
      </svg>
      <svg class="viewcube" width="90" height="100" viewBox="1808 180 90 100" role="img" aria-label="View cube">
        <defs><filter id="sh" x="-50%" y="-50%" width="200%" height="200%"><feGaussianBlur stdDeviation="5"/></filter></defs>
        <path d="M1830 250l26 20 30-20-28-12z" fill="#222" filter="url(#sh)"/>
        <path d="M1856 187l36 16-36 20-36-20z" fill="#929292"/>
        <path d="M1820 203l36 20v42l-32-22z" fill="#888"/>
        <path d="M1892 203l-36 20v42l32-23z" fill="#8d8d8d"/>
        <path d="M1820 203l36 20 36-20M1856 223v42" fill="none" stroke="#5d5d5d" stroke-width=".8"/>
        <path d="M1856 216l7 4v8l-7 5-7-5v-8z" fill="#77797c" opacity=".5"/>
        <g font-family="Open Sans" font-weight="700" font-size="9" fill="#5b5d61" text-anchor="middle">
          <text transform="matrix(.9 .45 -.6 .6 1855 205)">TOP</text>
          <text transform="matrix(.8 .5 0 1.200 1839 239)">FRONT</text>
          <text transform="matrix(.8 -.5 0 1.200 1874 239)">RIGHT</text>
        </g>
      </svg>
      <svg class="triad" width="72" height="66" viewBox="266 1048 72 66" role="img" aria-label="Coordinate axes">
        <path d="M300.500 1087v-17" stroke="#0a8a0a"/><path d="M300.500 1087l-15 8" stroke="#14148c"/><path d="M300.500 1087l15 8" stroke="#a01010"/>
        <path d="M300.500 1062l5.500 9c-1 3-10 3-11 0z" fill="#0b7f0b"/><path d="M278 1099l6-10 6 3v8z" fill="#0a0aa0"/><path d="M322 1099l-6-9-5 4v7z" fill="#b00c0c"/>
        <g font-family="Open Sans" font-size="12" text-anchor="middle"><text x="300.500" y="1060" fill="#2fd82f">Y</text><text x="274.500" y="1106" fill="#3a3ad8">Z</text><text x="325.500" y="1106" fill="#e23a3a">X</text></g>
      </svg>
      <div class="mini">
        <button class="mode" aria-label="Extents"><svg class="ico" width="16" height="16" viewBox="0 0 16 16"><path d="M1 0v16M15 0v16" stroke="#1b2f5c" stroke-width="2"/><path d="M3 7.500h10M5.500 5L3 7.500 5.500 10M10.500 5L13 7.500 10.500 10" fill="none" stroke="#1b2f5c" stroke-width="1.200"/></svg>
          <svg class="ico" width="8" height="6" viewBox="0 0 8 6"><path d="M0 0h8L4 6z" fill="#222"/></svg></button>
        <input aria-label="Distance" .value=${this.distance} @input=${(e: Event) => (this.distance = (e.target as HTMLInputElement).value)} />
        <button class="go" aria-label="More"><svg class="ico" width="6" height="9" viewBox="0 0 6 9"><path d="M0 0l6 4.500L0 9z" fill="#222"/></svg></button>
      </div>`;
  }

  private taskbar() {
    return html`<footer class="task">
      <svg class="scene" viewBox="0 0 1920 38" preserveAspectRatio="none" aria-hidden="true">
        <defs><filter id="bl2" x="-10%" y="-50%" width="120%" height="200%"><feGaussianBlur stdDeviation="3"/></filter>
        <linearGradient id="tk" x1="0" x2="1" y1="0" y2="0"><stop offset="0" stop-color="#1c1c1c"/><stop offset=".06" stop-color="#2c2c2a"/><stop offset=".13" stop-color="#55554a"/><stop offset=".2" stop-color="#44443f"/><stop offset=".25" stop-color="#525250"/><stop offset=".32" stop-color="#4c4c4c"/><stop offset=".41" stop-color="#353535"/><stop offset=".5" stop-color="#292929"/><stop offset=".75" stop-color="#2c2c2c"/><stop offset=".9" stop-color="#333"/><stop offset="1" stop-color="#1c1c1c"/></linearGradient></defs>
        <path d="M0 0h1920v38H0z" fill="url(#tk)"/>
        <g filter="url(#bl2)">
          <path d="M135 0h90l20 38h-95z" fill="#5c5b4d"/>
          <path d="M396 0h8v38h-8z" fill="#3e4f44"/><path d="M409 0h7l2 38h-7z" fill="#652f2a"/><path d="M438 38q14-14 28 0z" fill="#50582e"/>
          <path d="M592 0h12l-14 24z" fill="#77776a"/><path d="M558 2h10v12h-10z" fill="#3c3c3c"/><path d="M548 26h20l10 12h-30z" fill="#626262"/>
          <path d="M672 -6h122v50H662z" fill="#636341"/><path d="M762 38l30-10v12z" fill="#7c7a48"/><path d="M762 14h8v12h-8z" fill="#3c3c2c"/>
          <path d="M960 0h76l26 38h-80z" fill="#363636"/><path d="M1225 0h120l20 38h-110z" fill="#353535"/>
        </g>
      </svg>
      <button class="launch orb" aria-label="Start"><svg class="ico" width="38" height="38" viewBox="0 0 38 38">
        <defs><radialGradient id="orb" cx=".5" cy=".9" r=".95"><stop offset="0" stop-color="#4fe0ff"/><stop offset=".35" stop-color="#1b7fb4"/><stop offset=".7" stop-color="#1c4a72"/><stop offset="1" stop-color="#7c9fb5"/></radialGradient></defs>
        <circle cx="19" cy="19" r="18" fill="url(#orb)" stroke="#7fa6ba"/>
        <path d="M9 12c3-2 6-2 9 0l-1.500 7c-3-1.500-6-1.500-9 0z" fill="#f0642c"/><path d="M19.500 12.500c3 1.800 6 1.800 9.500 0l-1.500 7c-3 1.500-6 1.500-9 0z" fill="#8cc63c"/>
        <path d="M7 20.500c3-1.500 6-1.500 9 0l-1.500 7c-3-1.500-6-1.500-8.500-.500z" fill="#3aa0ea"/><path d="M18 21c3 1.500 6 1.500 9 0l-1.500 7c-3 1.500-6 1.500-9 0z" fill="#fccb3a"/>
        <path d="M3 14C5 5 13 1.500 19 1.500S33 5 35 14c-9-5-23-5-32 0z" fill="#fff" opacity=".3"/></svg></button>
      <button class="launch" aria-label="Firefox"><svg class="ico" width="32" height="32" viewBox="0 0 32 32">
        <circle cx="17" cy="14" r="12.500" fill="#2a63b5"/><path d="M12 4c5-3 12-1 15 4-4-1-7 0-8 3s3 5 0 7-8-1-9-5 0-7 2-9z" fill="#7fb6ea"/>
        <path d="M2 6c1 1 2 1.500 3 1.500C7 6 10 6 12 7c-1 1.500-2 2-2 3l4 1c0 2-3 2-3 4 1 4 6 5 10 3 3 0 2 4-2 4-3 1-6 0-8-1 4 4 13 3 15-5 1-4 0-8-1-10 6 4 7 13 3 19s-13 8-20 3S0 14 2 6z" fill="#ea6a18" stroke="#b8480c" stroke-width=".8"/><path d="M26 6c3 5 3 12-1 17s-11 6-16 3c8 1 14-2 16-8 2-5 2-8 1-12z" fill="#ffc93c"/></svg></button>
      <button class="launch" aria-label="Chrome"><svg class="ico" width="30" height="30" viewBox="0 0 30 30">
        <path d="M2.900 8A14 14 0 0 1 27.100 8H15L9 18.500z" fill="#de4336"/><path d="M27.100 8A14 14 0 0 1 15 29l6-10.500L21 8z" fill="#fbd43a"/><path d="M15 29A14 14 0 0 1 2.900 8L9 18.500l12 0z" fill="#4bae4f"/>
        <circle cx="15" cy="15" r="6.500" fill="#f3f3f3"/><circle cx="15" cy="15" r="5" fill="#4a86d8"/></svg></button>
      <button class="launch" aria-label="Explorer"><svg class="ico" width="34" height="30" viewBox="0 0 34 30">
        <path d="M1 3l2-2h8l2 2h18l2 3v20H1z" fill="#f0d888" stroke="#b5924a"/><path d="M4 2h6v3H4z" fill="#43a047"/><path d="M12 4h8v3h-8z" fill="#fff"/><path d="M13 4h3v2h-3z" fill="#d9432c"/><path d="M22 5h9v4h-9z" fill="#fff"/><path d="M22 6h3v2h-3z" fill="#2b74c9"/>
        <path d="M1 9h32v17H1z" fill="#f8e9aa"/><path d="M6 29V20q0-2 2-2h18q2 0 2 2v9h-5v-6H11v6z" fill="#8fd0f0" stroke="#3f8fbd"/></svg></button>
      <button class="running front" aria-label="Autodesk Inventor"><svg class="ico" width="32" height="32" viewBox="0 0 32 32">
        <path d="M1 4h30v26H1z" fill="#d8d8d8"/><path d="M13 5h18v16H13z" fill="#555"/><circle cx="24" cy="12" r="5" fill="#777" stroke="#2c2c2c" stroke-width="2"/><circle cx="24" cy="12" r="2" fill="#aaa"/>
        <path d="M2 2l9-2 2 1-3 3 3 16 4 1-1 2-7 2-3-1 2-3L5 5 2 4z" fill="#f2b01e" stroke="#a66c08" stroke-width=".7"/>
        <path d="M16 22h15v8H16z" fill="#fff"/><text x="17" y="29" font-family="DejaVu Sans" font-size="6" font-weight="700" fill="#000">PRO</text></svg></button>
      <button class="running" aria-label="Paint"><svg class="ico" width="32" height="32" viewBox="0 0 32 32">
        <path d="M1 20C1 12 8 6 17 6c8 0 13 4 13 9 0 6-6 4-9 7-2 3 1 8-5 8C8 30 1 27 1 20z" fill="#cfe6f6" stroke="#7fa9c6"/>
        <circle cx="11" cy="13" r="2.800" fill="#4bb04f"/><circle cx="18" cy="10" r="2.800" fill="#f4c23b"/><circle cx="7" cy="19" r="2.800" fill="#e04a3c"/><circle cx="14" cy="20" r="2.500" fill="#3a5f86"/>
        <path d="M18 31L25 11l3 1-8 19z" fill="#e08b35" stroke="#9c5a1c" stroke-width=".6"/><path d="M24 11l0-6 4-4 4 2-1 6-3 3z" fill="#d99a62"/></svg></button>
      <div class="tray">
        <button class="hidden" aria-label="Show hidden icons"><svg class="ico" width="8" height="5" viewBox="0 0 8 5"><path d="M0 5h8L4 0z" fill="#fff"/></svg></button>
        <button aria-label="Action Center"><svg class="ico" width="16" height="16" viewBox="0 0 16 16"><path d="M1 1v15" stroke="#fff" stroke-width="1.500"/><path d="M2 2h6v1.500h7l-1.500 3 1.500 3H8V8H2z" fill="#fff"/></svg></button>
        <button aria-label="Network"><svg class="ico" width="15" height="16" viewBox="0 0 15 16"><path d="M5 4.500h9.300v7H3.500V7" fill="#333" stroke="#fff" stroke-width="1.400"/><path d="M.8 1.500h4v3.500h-4zM2.800 5v8M6 14.500h7M9 12v2" fill="none" stroke="#fff" stroke-width="1.400"/></svg></button>
        <button aria-label="Volume"><svg class="ico" width="16" height="16" viewBox="0 0 16 16"><path d="M.5 5h3L7 1v14l-3.500-4h-3z" fill="#fff"/><path d="M9.500 5.500q1.500 2.500 0 5M11.500 3.500q3 4.500 0 9M13.500 2q4 6 0 12" fill="none" stroke="#ddd"/></svg></button>
        <div class="clock">4:44 PM<br />7/1/2012</div>
        <button class="peek" aria-label="Show desktop"></button>
      </div>
    </footer>`;
  }

  render() {
    return html`${this.header()}
      <div class="ribbon">${panels.map((p) => this.panel(p))}</div>
      <div class="main">
        ${this.browser()}
        <main class="view">
          <div class="doc">${["Minimize", "Restore", "Close"].map((k) => html`<button aria-label="${k} document">${this.winGlyphs(k)}</button>`)}</div>
          ${this.scene()}
        </main>
      </div>
      <section class="dialog" role="dialog" aria-label="Extrude">
        <div class="top"><h2>Extrude</h2><button class="x" aria-label="Close">${this.winGlyphs("Close")}</button></div>
        <button class="roll" aria-label="Expand dialog"><svg class="ico" width="10" height="8" viewBox="0 0 10 8"><path d="M0 0h10L5 8z" fill="#000"/></svg></button>
      </section>
      <div class="status"><p>Select a feature or dimension</p><output>1</output><output>1</output></div>
      ${this.taskbar()}`;
  }
}
